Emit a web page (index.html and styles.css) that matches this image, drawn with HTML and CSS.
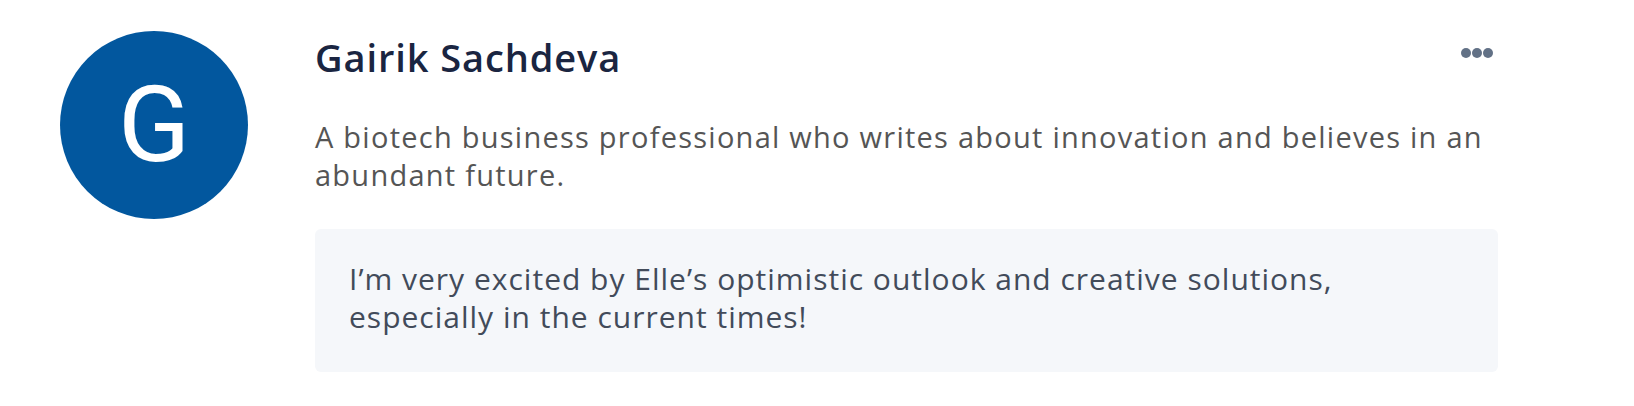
FILE: index.html
```html
<!DOCTYPE html>
<html lang="en">

<head>
    <meta charset="UTF-8">
    <meta name="viewport" content="width=device-width, initial-scale=1.0">
    <title>Gairik Sachdeva</title>
    <link rel="stylesheet" href="styles.css">
</head>

<body>

    <div class="profile">
        <div class="avatar">G</div>

        <div class="details">
            <div class="header">
                <h2 class="name">Gairik Sachdeva</h2>
                <button class="more" aria-label="More options">
                    <span class="dot"></span>
                    <span class="dot"></span>
                    <span class="dot"></span>
                </button>
            </div>

            <p class="bio">A biotech business professional who writes about innovation and believes in an abundant future.</p>

            <div class="quote">
                <p>I’m very excited by Elle’s optimistic outlook and creative solutions, especially in the current times!</p>
            </div>
        </div>
    </div>

</body>

</html>
```

FILE: styles.css
```css
/* Global Styles */
body {
    font-family: 'Open Sans', 'Lato', sans-serif;
    background-color: #ffffff;
    margin: 0;
    padding: 0;
}

.profile {
    display: flex;
    align-items: flex-start;
    gap: 67px;
    padding: 31px 0 0 60px;
}

.avatar {
    flex: 0 0 188px;
    width: 188px;
    height: 188px;
    border-radius: 50%;
    background-color: #02579e;
    color: #ffffff;
    font-family: 'Roboto', sans-serif;
    font-size: 106px;
    display: flex;
    justify-content: center;
    align-items: center;
}

.details {
    width: 1183px;
}

.header {
    display: flex;
    justify-content: space-between;
    align-items: flex-start;
    margin-top: 2px;
}

.name {
    margin: 0;
    font-size: 38px;
    line-height: 48px;
    font-weight: 600;
    letter-spacing: 0.9px;
    color: #1a2541;
}

.more {
    display: flex;
    gap: 1px;
    padding: 0;
    margin: 15px 5px 0 0;
    border: none;
    background: none;
    cursor: pointer;
}

.dot {
    width: 10px;
    height: 10px;
    border-radius: 50%;
    background-color: #627186;
}

.bio {
    margin: 37px 0 0;
    font-size: 29px;
    line-height: 38px;
    letter-spacing: 1.25px;
    color: #555555;
}

.quote {
    margin-top: 35px;
    background-color: #f5f7fa;
    border-radius: 6px;
    padding: 31px 60px 36px 34px;
}

.quote p {
    margin: 0;
    font-size: 30px;
    line-height: 38px;
    letter-spacing: 1px;
    color: #424b5a;
}
```
